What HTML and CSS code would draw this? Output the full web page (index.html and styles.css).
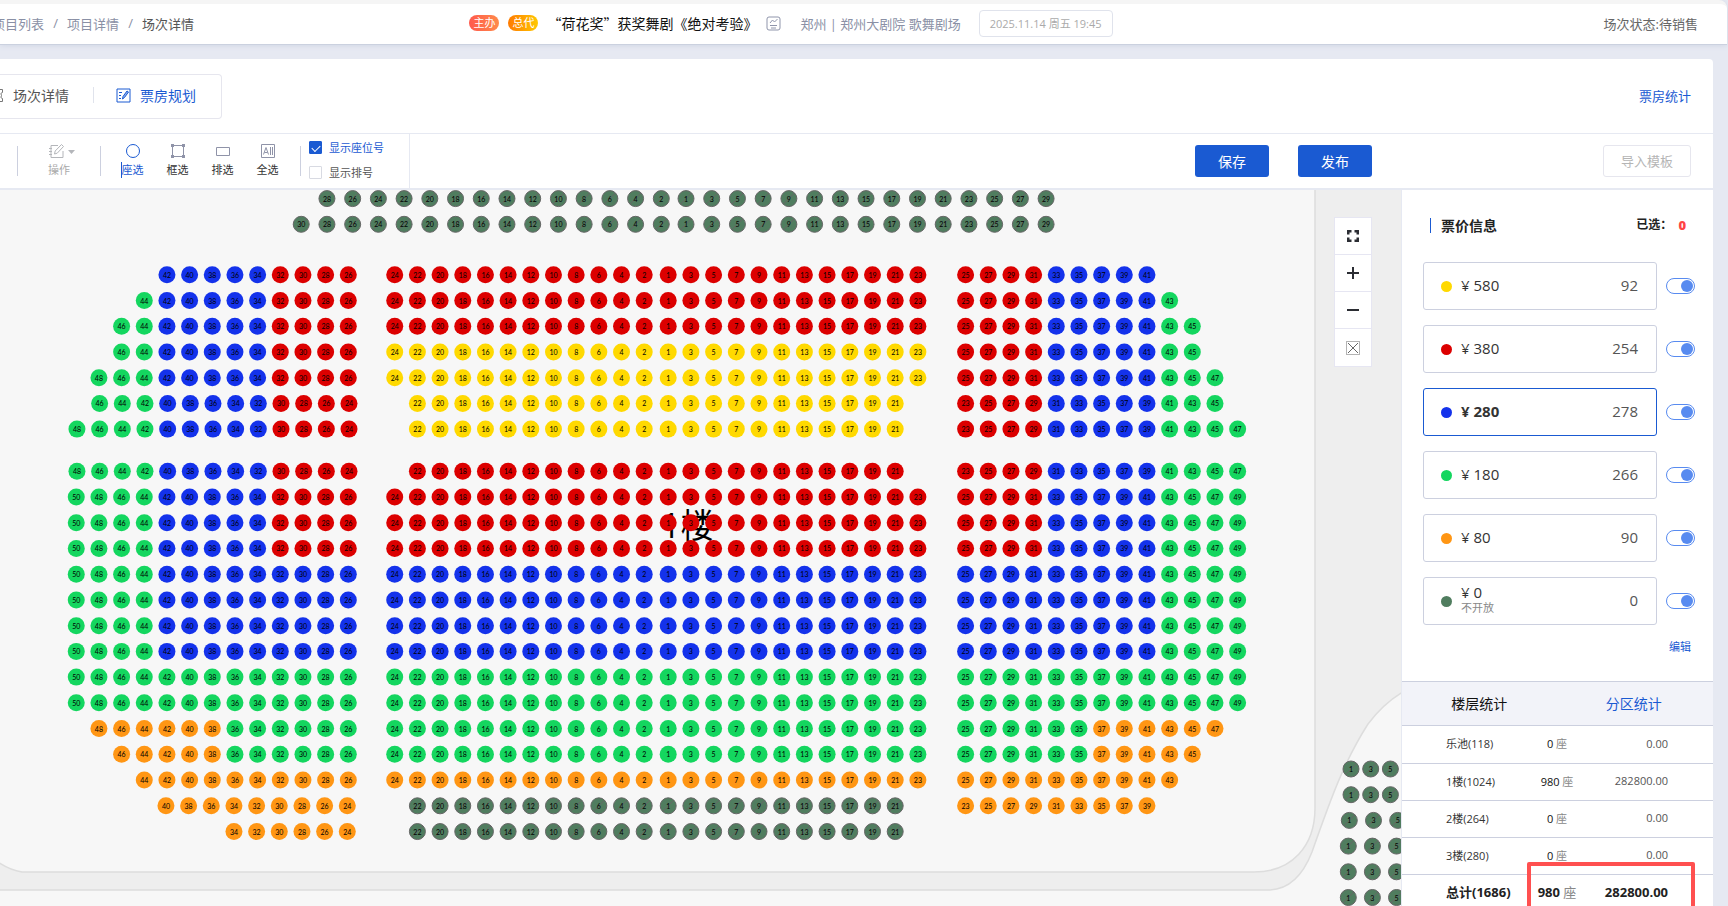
FILE: index.html
```html
<!DOCTYPE html>
<html lang="zh-CN">
<head>
<meta charset="utf-8">
<title>场次详情</title>
<link rel="stylesheet" href="styles.css">
</head>
<body>
<div class="page">
  <header class="topbar">
    <nav class="crumbs">
      <a href="#">项目列表</a><span class="slash">/</span><a href="#">项目详情</a><span class="slash">/</span><span class="current">场次详情</span>
    </nav>
    <div class="show">
      <span class="badge badge-host">主办</span>
      <span class="badge badge-agent">总代</span>
      <h1 class="show-name">“荷花奖”获奖舞剧《绝对考验》</h1>
      <svg class="show-icon" width="15" height="15" viewBox="0 0 15 15" fill="none" stroke="#8f95ab"><rect x="1" y="1" width="13" height="13" rx="2"/><path d="M4 7l2.500-3 2 2L11.500 3M4 9.500h7M5 12h5"/></svg>
      <span class="venue">郑州 | 郑州大剧院 歌舞剧场</span>
      <span class="date">2025.11.14 周五 19:45</span>
    </div>
    <span class="status">场次状态:待销售</span>
  </header>

  <main class="card">
    <div class="tabs-row">
      <div class="tabs">
        <button class="tab"><svg width="15" height="15" viewBox="0 0 15 15" fill="none" stroke="#777"><path d="M1 1.500h12.500v3c-2 0-2 2.500-.5 3-1.500.5-1.500 3 .5 3v3H1z"/></svg>场次详情</button>
        <span class="tab-line"></span>
        <button class="tab tab-on"><svg width="15" height="15" viewBox="0 0 15 15" fill="none" stroke="#1a5ad2"><path d="M1 1h13v13H1zM3 4.500h3M3 7.500h2M3 10.500h2" /><path d="M6.500 11l.5-2.500 4-5.500 1.500 1-4 5.500z" fill="#8fb0ee"/></svg>票房规划</button>
      </div>
      <a class="stat-link" href="#">票房统计</a>
    </div>

    <div class="toolbar">
      <div class="tools">
        <span class="tool-line"></span>
        <button class="tool tool-edit" disabled>
          <span class="tool-icon"><svg width="28" height="16" viewBox="0 0 28 16" fill="none" stroke="#b4b6ba"><path d="M10 2.500H3v12h12V8M1 5.500h3M1 8.500h3M1 11.500h3"/><path d="M6.500 11l.7-3 6.300-6.500 2 2-6.300 6.700z"/><path d="M20 7h7l-3.500 4z" fill="#b4b6ba" stroke="none"/></svg></span>操作
        </button>
        <span class="tool-line"></span>
        <div class="picks">
          <button class="tool tool-on"><span class="tool-icon"><svg width="16" height="16" viewBox="0 0 16 16" fill="none" stroke="#1a5ad2"><circle cx="8" cy="8" r="6.500"/></svg></span><span class="caret">座选</span></button>
          <button class="tool"><span class="tool-icon"><svg width="16" height="16" viewBox="0 0 16 16" fill="none" stroke="#8f93a8"><path d="M2.500 2.500h11v11h-11z"/><path d="M1 1h3v3H1zM12 1h3v3h-3zM1 12h3v3H1zM12 12h3v3h-3z" fill="#8f93a8" stroke="none"/></svg></span>框选</button>
          <button class="tool"><span class="tool-icon"><svg width="16" height="16" viewBox="0 0 16 16" fill="none" stroke="#8f93a8"><path d="M1.500 4.500h13v8h-13z"/></svg></span>排选</button>
          <button class="tool"><span class="tool-icon"><svg width="16" height="16" viewBox="0 0 16 16" fill="none" stroke="#8f93a8"><path d="M1.500 1.500h13v13h-13z"/><path d="M3.500 11.500l2.500-7 2.500 7M4.500 9.500h3M10.500 4v8M12.500 4v8"/></svg></span>全选</button>
        </div>
        <span class="tool-line"></span>
        <div class="checks">
          <label class="check check-on"><input type="checkbox" checked>显示座位号</label>
          <label class="check"><input type="checkbox">显示排号</label>
        </div>
      </div>
      <div class="actions">
        <button class="primary">保存</button>
        <button class="primary">发布</button>
      </div>
      <div class="import"><button class="ghost" disabled>导入模板</button></div>
    </div>

    <div class="work">
      <section class="map">
        <svg class="hall" id="hall" viewBox="0 190 1401 716" preserveAspectRatio="xMidYMin slice">
          <rect x="0" y="190" width="1401" height="716" fill="#eeeeee"/>
          <path class="zone" d="M-2 862Q10 870 22 872H1254C1292 872 1315 846 1315 808V180H-2Z"/>
          <path class="zone" d="M-2 890H1268C1290 890 1303 875 1312 852C1332 795 1345 760 1368 724Q1384 703 1403 692V920H-2Z"/>
          <text class="floor-name" x="661" y="538">1楼</text>
        </svg>
        <div class="zoom">
          <button aria-label="适应屏幕"><svg width="14" height="14" viewBox="0 0 14 14" fill="none" stroke="#2b2d33" stroke-width="2.500"><path d="M5.500 2.250H2.250v3.250M8.500 2.250h3.250v3.250M5.500 11.750H2.250V8.500M8.500 11.750h3.250V8.500"/></svg></button>
          <button aria-label="放大"><svg width="14" height="14" viewBox="0 0 14 14" stroke="#2b2d33" stroke-width="2"><path d="M1 7h12M7 1v12"/></svg></button>
          <button aria-label="缩小"><svg width="14" height="14" viewBox="0 0 14 14" stroke="#2b2d33" stroke-width="2"><path d="M1 7h12"/></svg></button>
          <button aria-label="清除"><svg width="14" height="14" viewBox="0 0 14 14" fill="none" stroke="#666"><path d="M.5.5h13v13H.5z" stroke-dasharray="1 1"/><path d="M2 2l10 10M12 2L2 12"/></svg></button>
        </div>
      </section>

      <aside class="side">
        <div class="side-head"><h2>票价信息</h2><span class="picked">已选：<b>0</b></span></div>
        <ul class="prices">
          <li><button class="price"><i class="dot yellow"></i><span class="amount">¥ 580</span><span class="count">92</span></button><input class="switch" type="checkbox" role="switch" aria-label="¥ 580" checked></li>
          <li><button class="price"><i class="dot red"></i><span class="amount">¥ 380</span><span class="count">254</span></button><input class="switch" type="checkbox" role="switch" aria-label="¥ 380" checked></li>
          <li><button class="price price-on"><i class="dot blue"></i><span class="amount">¥ 280</span><span class="count">278</span></button><input class="switch" type="checkbox" role="switch" aria-label="¥ 280" checked></li>
          <li><button class="price"><i class="dot green"></i><span class="amount">¥ 180</span><span class="count">266</span></button><input class="switch" type="checkbox" role="switch" aria-label="¥ 180" checked></li>
          <li><button class="price"><i class="dot orange"></i><span class="amount">¥ 80</span><span class="count">90</span></button><input class="switch" type="checkbox" role="switch" aria-label="¥ 80" checked></li>
          <li><button class="price"><i class="dot closed"></i><span class="amount">¥ 0<small>不开放</small></span><span class="count">0</span></button><input class="switch" type="checkbox" role="switch" aria-label="¥ 0" checked></li>
        </ul>
        <a class="edit" href="#">编辑</a>
        <div class="stats">
          <div class="stat-tabs"><button>楼层统计</button><button class="off">分区统计</button></div>
          <table>
            <tbody>
              <tr><th scope="row">乐池(118)</th><td class="seats">0 <span>座</span></td><td class="sum">0.00</td></tr>
              <tr><th scope="row">1楼(1024)</th><td class="seats">980 <span>座</span></td><td class="sum">282800.00</td></tr>
              <tr><th scope="row">2楼(264)</th><td class="seats">0 <span>座</span></td><td class="sum">0.00</td></tr>
              <tr><th scope="row">3楼(280)</th><td class="seats">0 <span>座</span></td><td class="sum">0.00</td></tr>
              <tr class="total"><th scope="row">总计(1686)</th><td class="seats">980 <span>座</span></td><td class="sum">282800.00</td></tr>
            </tbody>
          </table>
          <div class="mark"></div>
        </div>
      </aside>
    </div>
  </main>
</div>
<script src="seats.js"></script>
</body>
</html>
```
FILE: styles.css
```css
* { box-sizing: border-box; }
body {
  margin: 0;
  font-family: "Open Sans", "Noto Sans CJK SC", sans-serif;
  font-size: 13px;
  color: #333;
  background: #e6e9f2;
}
button { font: inherit; color: inherit; background: none; border: 0; padding: 0; margin: 0; }
a { color: inherit; text-decoration: none; }
svg { display: block; flex: none; }
.page { height: 100vh; display: flex; flex-direction: column; overflow: hidden; }

.topbar {
  flex: none;
  display: grid;
  grid-template-columns: 1fr auto 1fr;
  align-items: center;
  height: 45px;
  margin: 0 1px 0 0;
  padding: 0 29px 2px 0;
  background: #fff;
  border-top: 4px solid #f5f5f5;
  border-bottom: 1px solid #cbd1df;
  border-radius: 0 8px 0 0;
  box-shadow: 0 1px 5px #d3d8e6;
}
.crumbs { display: flex; align-items: center; gap: 8px; margin-left: -8px; color: #8a90a5; white-space: nowrap; }
.slash { width: 7px; text-align: center; }
.crumbs .current { color: #555; }
.show { display: flex; align-items: center; white-space: nowrap; margin-right: 116px; }
.badge { height: 16px; padding: 0 4px; border-radius: 8px; color: #fff; font-size: 11px; line-height: 16px; margin-right: 9px; }
.badge-host { background: linear-gradient(90deg, #ff5a4d, #ff8a4a); }
.badge-agent { background: linear-gradient(90deg, #ff7a00, #ffc800); }
.show-name { margin: 0 9px 0 0; font-family: "Noto Sans CJK SC", sans-serif; font-size: 14px; font-weight: 400; color: #111; }
.venue { margin: 0 18px 0 19px; color: #8a90a5; }
.date { height: 27px; padding: 0 10px; border: 1px solid #e0e3ec; border-radius: 4px; color: #aaa; font-size: 11px; line-height: 25px; }
.status { justify-self: end; color: #666; }

.card { flex: 1; min-height: 0; margin: 14px 15px 0 0; display: flex; flex-direction: column; background: #fff; border-radius: 0 4px 0 0; }
.tabs-row { flex: none; height: 75px; padding: 0 22px 0 0; display: flex; align-items: center; justify-content: space-between; border-bottom: 1px solid #e6e9f2; }
.tabs { display: flex; align-items: center; height: 45px; padding: 0 25px 2px 0; margin-left: -11px; border: 1px solid #e6e6ee; border-left: 0; border-radius: 0 4px 4px 0; }
.tab { display: flex; align-items: center; gap: 9px; font-size: 14px; color: #555; }
.tab-on { color: #1a5ad2; }
.tab-line { width: 1px; height: 16px; margin: 0 22px 0 24px; background: #e0e3ec; }
.stat-link { padding-bottom: 2px; color: #1a5ad2; }

.toolbar { flex: none; height: 56px; display: flex; border-bottom: 2px solid #e6e9f2; }
.tools { display: flex; align-items: center; width: 410px; padding-left: 17px; border-right: 1px solid #e6e9f2; }
.tool-line { width: 1px; height: 30px; background: #ccd0df; }
.tool { width: 45px; display: flex; flex-direction: column; align-items: center; gap: 3px; padding-bottom: 1px; font-size: 11px; line-height: 16px; color: #333; }
.tool-icon { display: flex; height: 16px; }
.tool-edit { width: 82px; color: #aaa; align-items: flex-start; padding-left: 30px; }
.tool-on { color: #1a5ad2; }
.caret { box-shadow: -1px 0 #1a5ad2; }
.picks { display: flex; padding: 0 10px 0 9px; }
.checks { display: flex; flex-direction: column; gap: 9px; padding: 0 0 2px 8px; }
.check { display: flex; align-items: center; gap: 7px; font-size: 11px; line-height: 16px; color: #555; }
.check-on { color: #1a5ad2; }
.check input { appearance: none; display: grid; place-items: center; width: 13px; height: 13px; margin: 0; border: 1px solid #d8dae2; border-radius: 1px; }
.check input:checked { background: #1a5ad2; border-color: #1a5ad2; }
.check input:checked::after { content: ""; width: 7px; height: 4px; border-left: 1px solid #fff; border-bottom: 1px solid #fff; transform: rotate(-45deg); }
.actions { flex: 1; display: flex; align-items: center; justify-content: flex-end; gap: 29px; padding-right: 29px; }
.primary { width: 74px; height: 32px; border-radius: 3px; background: #1a5ad2; color: #fff; font-size: 14px; }
.import { width: 312px; display: flex; align-items: center; justify-content: flex-end; padding-right: 22px; }
.ghost { width: 88px; height: 32px; padding-bottom: 2px; border: 1px solid #e6e6ee; border-radius: 3px; color: #b5b5b5; }

.work { flex: 1; min-height: 0; display: flex; }
.map { flex: 1; min-width: 0; position: relative; overflow: hidden; }
.hall { width: 100%; height: 100%; }
.zone { fill: #f7f7f7; stroke: #dddddd; stroke-width: 1.500; }
.floor-name { font-size: 34px; fill: #000; }
.seat-number { font-family: Lato, sans-serif; font-size: 7px; text-anchor: middle; fill: #000; }
.slash-line { stroke: #666; }
.zoom { position: absolute; top: 27px; right: 29px; border: 1px solid #e6e6f2; background: #fff; }
.zoom button { display: grid; place-items: center; width: 36px; height: 37px; border-bottom: 1px solid #e6e6f2; }
.zoom button:last-child { border-bottom: 0; }

.side { flex: none; width: 312px; border-left: 1px solid #e6e9f2; }
.side-head { display: flex; justify-content: space-between; align-items: center; height: 72px; padding: 0 27px 2px 28px; }
.side-head h2 { margin: 0; padding-left: 10px; border-left: 1px solid #1a5ad2; font-size: 14px; line-height: 15px; font-weight: 600; color: #222; }
.picked { display: flex; align-items: center; font-size: 12px; line-height: 16px; font-weight: 600; color: #222; }
.picked b { margin-left: 6px; font-size: 13px; color: #ff4444; }
.prices { list-style: none; margin: 0; padding: 0 18px 0 21px; display: grid; gap: 15px; }
.prices li { display: flex; align-items: center; gap: 9px; }
.price { flex: 1; display: flex; align-items: center; height: 48px; padding: 0 18px 0 17px; border: 1px solid #ccd0df; border-radius: 3px; font-size: 15px; line-height: 16px; text-align: left; }
.price-on { border-color: #1a5ad2; }
.price-on .amount { font-weight: 700; }
.dot { width: 11px; height: 11px; border-radius: 50%; margin-right: 9px; }
.yellow { background: #ffd900; }
.red { background: #dc0000; }
.blue { background: #1432eb; }
.green { background: #14d65f; }
.orange { background: #ff9614; }
.closed { background: #507d5f; }
.amount, .count { padding-bottom: 2px; }
.amount small { display: block; font-size: 11px; line-height: 16px; color: #888; }
.count { margin-left: auto; color: #555; }
.switch { appearance: none; display: flex; justify-content: flex-end; width: 29px; height: 16px; padding: 1px; margin: 0; border: 1px solid #588bf0; border-radius: 8px; }
.switch::after { content: ""; width: 12px; height: 12px; border-radius: 50%; background: #588bf0; }
.edit { display: block; margin: 14px 22px 26px; text-align: right; font-size: 11px; line-height: 16px; color: #1a5ad2; }
.stats { position: relative; }
.stat-tabs { display: grid; grid-template-columns: 1fr 1fr; height: 45px; padding: 0 2px 2px 0; border: solid #ccd0df; border-width: 1px 0; background: #f2f3f9; font-size: 14px; color: #111; }
.stat-tabs .off { color: #1a5ad2; }
table { width: 100%; border-collapse: collapse; table-layout: fixed; font-size: 11px; }
tr { height: 37px; border-bottom: 1px solid #ccd0df; }
th, td { padding: 0 0 2px; font-weight: 400; white-space: nowrap; }
th { width: 116px; padding-left: 44px; text-align: left; }
.seats { width: 78px; text-align: center; color: #111; }
.seats span { color: #888; }
.sum { padding-right: 45px; text-align: right; color: #555; }
.total { height: 37px; font-size: 13px; }
.total th, .total td { font-weight: 700; color: #222; }
.total .seats span { font-weight: 400; }
.mark { position: absolute; top: 181px; right: 18px; width: 168px; height: 70px; border: 4px solid #ff5050; border-radius: 2px; }
```
FILE: seats.js
```js
const hall = document.getElementById('hall');
const NS = 'http://www.w3.org/2000/svg';
const COLORS = { y: '#ffd900', r: '#dc0000', b: '#1432eb', g: '#14d65f', o: '#ff9614', x: '#507d5f' };

function add(tag, attrs, text) {
  const el = document.createElementNS(NS, tag);
  for (const key in attrs) el.setAttribute(key, attrs[key]);
  if (text !== undefined) el.textContent = text;
  hall.appendChild(el);
}

function seat(x, y, number, color) {
  const closed = color === 'x';
  add('circle', { cx: x, cy: y, r: closed ? 8 : 8.5, fill: COLORS[color], stroke: closed ? '#666' : 'none' });
  if (closed) add('path', { class: 'slash-line', d: `M${x - 5.5} ${y + 5.5}L${x + 5.5} ${y - 5.5}` });
  add('text', { class: 'seat-number', x: x, y: y + 3 }, number);
}

// Draws seats outward from the first one; colors is one letter per seat.
function run(x, y, first, colors, pitch) {
  [...colors].forEach((c, i) => seat(x + i * pitch, y, first + i * 2, c));
}

const r = (letter, n) => letter.repeat(n);

// Orchestra pit
run(661.3, 198.6, 2, r('x', 14), -25.72);
run(686, 198.6, 1, r('x', 15), 25.72);
run(661.3, 224.3, 2, r('x', 15), -25.72);
run(686, 224.3, 1, r('x', 15), 25.72);

// First floor: [center color, center seats per side, left wing, right wing]
const wing = n => 'rrrrbbbbb' + r('g', n - 9);
const blueWing = r('b', 9) + 'gggg';
const rows = [
  ['r', 12, wing(9), wing(9)],
  ['r', 12, wing(10), wing(10)],
  ['r', 12, wing(11), wing(11)],
  ['y', 12, wing(11), wing(11)],
  ['y', 12, wing(12), wing(12)],
  ['y', 11, wing(12), wing(12)],
  ['y', 11, wing(13), wing(13)],
  ['r', 11, wing(13), wing(13)],
  ['r', 12, wing(13), wing(13)],
  ['r', 12, wing(13), wing(13)],
  ['r', 12, wing(13), wing(13)],
  ['b', 12, blueWing, blueWing],
  ['b', 12, blueWing, blueWing],
  ['b', 12, blueWing, blueWing],
  ['b', 12, blueWing, blueWing],
  ['g', 12, r('g', 13), r('g', 13)],
  ['g', 12, r('g', 13), r('g', 13)],
  ['g', 12, 'ggggggoooooo', 'ggggggoooooo'],
  ['g', 12, 'ggggggooooo', 'ggggggooooo'],
  ['o', 12, r('o', 10), r('o', 10)],
  ['x', 11, r('o', 9), r('o', 9)],
  ['x', 11, r('o', 6), '']
];
rows.forEach(([color, half, left, right], i) => {
  const y = i < 7 ? 274.8 + i * 25.72 : 471.2 + (i - 7) * 25.74;
  const leftX = half === 12 ? 348.3 : i < 10 ? 349 : 347.3;
  run(leftX, y, half * 2 + 2, left, -22.67);
  run(644.2, y, 2, r(color, half), -22.68);
  run(668.2, y, 1, r(color, half), 22.7);
  run(965.6, y, half * 2 + 1, right, 22.67);
});

// Neighbouring block, cut off by the side panel
[[1351, 19.7], [1351, 19.7], [1349.3, 24.2], [1348.3, 24.1], [1348.3, 24.1], [1348.3, 24.1]].forEach(([x, pitch], i) => {
  run(x, 769 + i * 25.7, 1, 'xxx', pitch);
});
```
